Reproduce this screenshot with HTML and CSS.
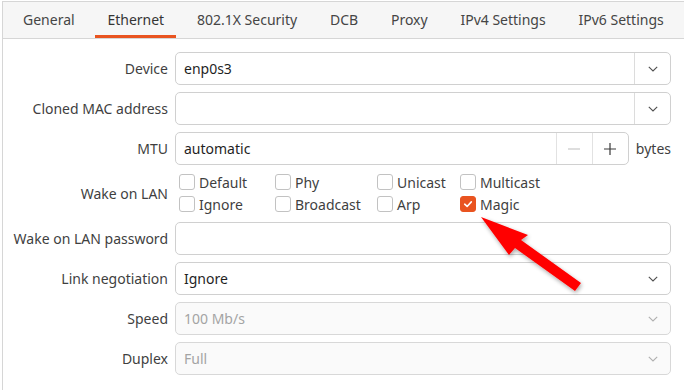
FILE: index.html
```html
<!DOCTYPE html>
<html>
<head>
<meta charset="utf-8">
<link rel="stylesheet" href="styles.css">
</head>
<body>
<div class="frame">
  <div class="tabs">
    <div class="tab">General</div>
    <div class="tab active">Ethernet</div>
    <div class="tab">802.1X Security</div>
    <div class="tab">DCB</div>
    <div class="tab">Proxy</div>
    <div class="tab">IPv4 Settings</div>
    <div class="tab">IPv6 Settings</div>
  </div>
  <div class="form">
    <div class="label">Device</div>
    <div class="combo">
      <div class="value">enp0s3</div>
      <div class="drop"><svg class="chev" viewBox="0 0 10 6"><path d="M0.8 0.8 L5 5 L9.2 0.8"/></svg></div>
    </div>

    <div class="label">Cloned MAC address</div>
    <div class="combo">
      <div class="value"></div>
      <div class="drop"><svg class="chev" viewBox="0 0 10 6"><path d="M0.8 0.8 L5 5 L9.2 0.8"/></svg></div>
    </div>

    <div class="label">MTU</div>
    <div class="mtu-row">
      <div class="spin">
        <div class="value">automatic</div>
        <div class="btn minus"><svg viewBox="0 0 12 12"><path d="M0 6 H12"/></svg></div>
        <div class="btn plus"><svg viewBox="0 0 12 12"><path d="M0 6 H12 M6 0 V12"/></svg></div>
      </div>
      <div class="unit">bytes</div>
    </div>

    <div class="label">Wake on LAN</div>
    <div class="checks">
      <label class="check"><span class="box"></span>Default</label>
      <label class="check"><span class="box"></span>Phy</label>
      <label class="check"><span class="box"></span>Unicast</label>
      <label class="check"><span class="box"></span>Multicast</label>
      <label class="check"><span class="box"></span>Ignore</label>
      <label class="check"><span class="box"></span>Broadcast</label>
      <label class="check"><span class="box"></span>Arp</label>
      <label class="check"><span class="box on"><svg viewBox="0 0 16 16"><path d="M4.2 8.2 L7 10.8 L11.8 5.6"/></svg></span>Magic</label>
    </div>

    <div class="label">Wake on LAN password</div>
    <div class="entry"></div>

    <div class="label">Link negotiation</div>
    <div class="combo flat">
      <div class="value">Ignore</div>
      <div class="drop"><svg class="chev" viewBox="0 0 10 6"><path d="M0.8 0.8 L5 5 L9.2 0.8"/></svg></div>
    </div>

    <div class="label">Speed</div>
    <div class="combo flat disabled">
      <div class="value">100 Mb/s</div>
      <div class="drop"><svg class="chev" viewBox="0 0 10 6"><path d="M0.8 0.8 L5 5 L9.2 0.8"/></svg></div>
    </div>

    <div class="label">Duplex</div>
    <div class="combo flat disabled">
      <div class="value">Full</div>
      <div class="drop"><svg class="chev" viewBox="0 0 10 6"><path d="M0.8 0.8 L5 5 L9.2 0.8"/></svg></div>
    </div>
  </div>
</div>

<svg class="arrow" viewBox="0 0 684 390" width="684" height="390">
  <defs>
    <filter id="shadow" x="-20%" y="-20%" width="140%" height="140%">
      <feGaussianBlur in="SourceAlpha" stdDeviation="2"/>
      <feOffset dx="1" dy="2" result="b"/>
      <feComponentTransfer><feFuncA type="linear" slope="0.35"/></feComponentTransfer>
      <feMerge><feMergeNode/><feMergeNode in="SourceGraphic"/></feMerge>
    </filter>
  </defs>
  <polygon filter="url(#shadow)" fill="#ff0000" points="481,217 528,235 521,240 581,283 575,291 515,248 509,255"/>
</svg>
</body>
</html>
```

FILE: styles.css
```css
html, body {
  margin: 0;
  padding: 0;
  background: #ffffff;
  width: 684px;
  height: 390px;
  overflow: hidden;
}

body {
  font-family: "Noto Sans", "Open Sans", sans-serif;
  font-size: 14px;
  color: #3d3d3d;
  position: relative;
}

.frame {
  margin: 1px 0 0 2px;
  width: 682px;
  height: 389px;
  overflow: hidden;
  border-top: 1px solid #d6d6d6;
  border-left: 1px solid #d6d6d6;
  box-sizing: border-box;
}

.tabs {
  display: flex;
  height: 36px;
  padding-left: 8px;
  gap: 8.8px;
  background: #f6f6f6;
  border-bottom: 1px solid #d6d6d6;
}

.tab {
  padding: 0 12px;
  display: flex;
  align-items: center;
  color: #454545;
  white-space: nowrap;
  box-sizing: border-box;
  border-bottom: 3px solid transparent;
  padding-top: 2px;
}

.tab.active {
  border-bottom-color: #e95420;
  color: #353535;
}

.form {
  display: grid;
  grid-template-columns: 165px 496px;
  grid-template-rows: 33px 33px 33px 43px 33px 33px 33px 33px;
  column-gap: 7px;
  row-gap: 7px;
  padding-top: 13px;
}

.label {
  text-align: right;
  white-space: nowrap;
  align-self: center;
  color: #3f3f3f;
}

.combo, .entry, .spin {
  border: 1px solid #d0d0d0;
  border-radius: 5px;
  background: #ffffff;
  box-sizing: border-box;
  display: flex;
  align-items: stretch;
}

.combo.disabled {
  background: #fafafa;
  border-color: #d8d8d8;
}

.value {
  flex: 1;
  display: flex;
  align-items: center;
  padding-left: 8px;
  color: #1f1f1f;
}

.disabled .value {
  color: #a4a4a4;
}

.drop {
  width: 35px;
  border-left: 1px solid #dcdcdc;
  display: flex;
  align-items: center;
  justify-content: center;
}

.flat .drop {
  border-left-color: transparent;
}

.chev {
  width: 10px;
  height: 6px;
  fill: none;
  stroke: #505050;
  stroke-width: 1.1;
}

.disabled .chev {
  stroke: #b0b0b0;
}

.mtu-row {
  display: flex;
  align-items: center;
  gap: 7px;
}

.spin {
  width: 454px;
  height: 33px;
}

.btn {
  width: 35px;
  border-left: 1px solid #e2e2e2;
  display: flex;
  align-items: center;
  justify-content: center;
}

.btn svg {
  width: 12px;
  height: 12px;
  fill: none;
  stroke-width: 1.2;
}

.minus svg { stroke: #c8c8c8; }
.plus svg { stroke: #3a3a3a; }

.unit {
  color: #3f3f3f;
}

.checks {
  display: grid;
  grid-template-columns: 96px 102px 83px auto;
  grid-template-rows: 22px 22px;
  margin: -1px 0 0 4px;
}

.check {
  display: flex;
  align-items: center;
  gap: 4px;
  color: #3f3f3f;
  white-space: nowrap;
}

.box {
  width: 16px;
  height: 16px;
  box-sizing: border-box;
  border: 1px solid #c2c2c2;
  border-radius: 3px;
  background: #ffffff;
  display: flex;
}

.box.on {
  background: #e95420;
  border-color: #e95420;
}

.box.on svg {
  width: 14px;
  height: 14px;
  fill: none;
  stroke: #ffffff;
  stroke-width: 1.8;
  stroke-linecap: round;
  stroke-linejoin: round;
}

.arrow {
  position: absolute;
  left: 0;
  top: 0;
  pointer-events: none;
}
```
